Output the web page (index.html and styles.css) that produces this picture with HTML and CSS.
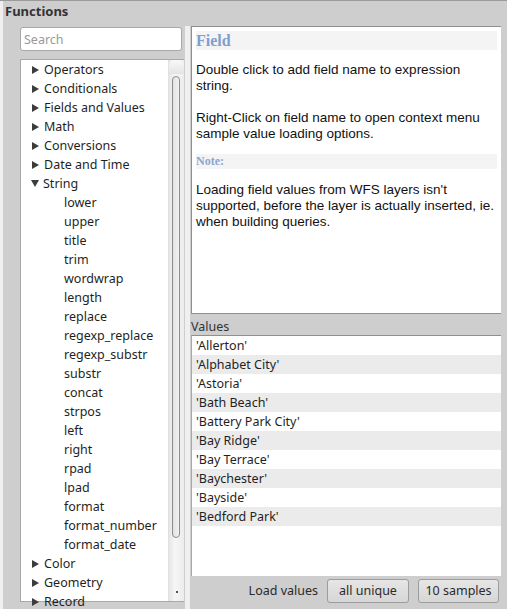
FILE: index.html
```html
<!DOCTYPE html>
<html>
<head>
<meta charset="utf-8">
<link rel="stylesheet" href="styles.css">
</head>
<body>
<div class="panel">
  <div class="dots-left"></div>
  <div class="main">
    <div class="title">Functions</div>
    <div class="body">
      <div class="left">
        <div class="search">Search</div>
        <div class="tree">
          <div class="tree-items">
            <div class="item"><span class="arrow"></span>Operators</div>
            <div class="item"><span class="arrow"></span>Conditionals</div>
            <div class="item"><span class="arrow"></span>Fields and Values</div>
            <div class="item"><span class="arrow"></span>Math</div>
            <div class="item"><span class="arrow"></span>Conversions</div>
            <div class="item"><span class="arrow"></span>Date and Time</div>
            <div class="item"><span class="arrow open"></span>String</div>
            <div class="item child">lower</div>
            <div class="item child">upper</div>
            <div class="item child">title</div>
            <div class="item child">trim</div>
            <div class="item child">wordwrap</div>
            <div class="item child">length</div>
            <div class="item child">replace</div>
            <div class="item child">regexp_replace</div>
            <div class="item child">regexp_substr</div>
            <div class="item child">substr</div>
            <div class="item child">concat</div>
            <div class="item child">strpos</div>
            <div class="item child">left</div>
            <div class="item child">right</div>
            <div class="item child">rpad</div>
            <div class="item child">lpad</div>
            <div class="item child">format</div>
            <div class="item child">format_number</div>
            <div class="item child">format_date</div>
            <div class="item"><span class="arrow"></span>Color</div>
            <div class="item"><span class="arrow"></span>Geometry</div>
            <div class="item"><span class="arrow"></span>Record</div>
          </div>
          <div class="scrollbar">
            <div class="sb-top"></div>
            <div class="sb-handle"></div>
            <div class="sb-dot"></div>
          </div>
        </div>
      </div>
      <div class="splitter"></div>
      <div class="right">
        <div class="help">
          <div class="h-head">Field</div>
          <p class="first">Double click to add field name to expression string.</p>
          <p>Right-Click on field name to open context menu sample value loading options.</p>
          <div class="h-note">Note:</div>
          <p class="after-note">Loading field values from WFS layers isn't supported, before the layer is actually inserted, ie. when building queries.</p>
        </div>
        <div class="values-label">Values</div>
        <div class="values">
          <div class="row">'Allerton'</div>
          <div class="row alt">'Alphabet City'</div>
          <div class="row">'Astoria'</div>
          <div class="row alt">'Bath Beach'</div>
          <div class="row">'Battery Park City'</div>
          <div class="row alt">'Bay Ridge'</div>
          <div class="row">'Bay Terrace'</div>
          <div class="row alt">'Baychester'</div>
          <div class="row">'Bayside'</div>
          <div class="row alt">'Bedford Park'</div>
        </div>
        <div class="buttons">
          <span class="load-label">Load values</span>
          <div class="btn btn-unique">all unique</div>
          <div class="btn btn-samples">10 samples</div>
        </div>
      </div>
    </div>
  </div>
</div>
</body>
</html>
```
FILE: styles.css
```css
html, body {
  margin: 0;
  padding: 0;
  background: #cecece;
}
.panel {
  width: 507px;
  height: 608px;
  border-top: 1px solid #9a9a9a;
  display: flex;
  overflow: hidden;
  font-family: "Noto Sans", sans-serif;
  font-size: 12.5px;
  color: #1f1f1f;
}
.dots-left {
  width: 3px;
  flex: none;
  background-image: radial-gradient(circle, #f2f2f2 0.7px, transparent 0.8px);
  background-size: 2px 2px;
}
.main {
  flex: 1;
  display: flex;
  flex-direction: column;
  min-width: 0;
}
.title {
  height: 25px;
  padding-left: 2px;
  font-weight: bold;
  font-size: 13px;
  line-height: 20px;
  color: #333;
}
.body {
  flex: 1;
  display: flex;
  min-height: 0;
}
.left {
  width: 164px;
  margin-left: 17px;
  flex: none;
  display: flex;
  flex-direction: column;
  padding-top: 1px;
}
.search {
  height: 22px;
  background: #fff;
  border: 1px solid #a8a8a8;
  border-radius: 3px;
  color: #9a9a9a;
  line-height: 23px;
  padding-left: 3px;
  font-size: 12.5px;
  width: 157px;
}
.tree {
  margin-top: 8px;
  height: 541px;
  background: #fff;
  border: 1px solid #a8a8a8;
  border-right: none;
  display: flex;
  position: relative;
}
.tree-items {
  flex: 1;
}
.item {
  height: 19px;
  line-height: 19px;
  padding-left: 10px;
  display: flex;
  align-items: center;
  white-space: nowrap;
}
.item.child {
  padding-left: 43px;
}
.arrow {
  width: 0;
  height: 0;
  border-top: 4px solid transparent;
  border-bottom: 4px solid transparent;
  border-left: 7px solid #3c3c3c;
  margin-right: 5px;
  margin-left: 1px;
}
.arrow.open {
  border-left: 4px solid transparent;
  border-right: 4px solid transparent;
  border-top: 7px solid #3c3c3c;
  border-bottom: none;
  margin-left: 0;
  margin-right: 4px;
}
.scrollbar {
  width: 15px;
  flex: none;
  background: linear-gradient(to right, #e6e6e6, #f6f6f6 40%, #ececec);
  border-left: 1px solid #e0e0e0;
  position: relative;
}
.sb-top {
  height: 14px;
  background: linear-gradient(#f8f8f8, #e4e4e4);
  border-radius: 5px 5px 0 0;
}
.sb-handle {
  position: absolute;
  left: 3px;
  top: 16px;
  width: 6px;
  height: 460px;
  border: 1px solid #8c8c8c;
  border-radius: 4px;
  background: linear-gradient(to right, #e2e2e2, #f2f2f2);
}
.sb-dot {
  position: absolute;
  left: 7px;
  bottom: 8px;
  width: 2px;
  height: 2px;
  background: #555;
}
.splitter {
  width: 5px;
  margin-left: 1px;
  flex: none;
  background-image: radial-gradient(circle, #f2f2f2 0.7px, transparent 0.8px);
  background-size: 2px 2px;
}
.right {
  width: 310px;
  margin-left: 1px;
  flex: none;
  display: flex;
  flex-direction: column;
}
.help {
  box-sizing: border-box;
  height: 288px;
  background: #fff;
  border: 1px solid #8f8f8f;
  border-right: none;
  padding: 4px 4px 0 4px;
  font-family: "Liberation Sans", Arial, sans-serif;
  font-size: 13.5px;
  line-height: 16px;
  color: #111;
}
.h-head {
  background: #f4f4f4;
  font-family: "Liberation Serif", serif;
  font-weight: bold;
  font-size: 16px;
  line-height: 19px;
  color: #7e9fd0;
}
.help p {
  margin: 16px 0 0 0;
}
.help p.first {
  margin-top: 12px;
}
.h-note {
  margin-top: 12px;
  background: #f4f4f4;
  font-family: "Liberation Serif", serif;
  font-weight: bold;
  font-size: 12px;
  line-height: 15px;
  color: #8aa7d3;
}
.help p.after-note {
  margin-top: 13px;
}
.values-label {
  height: 21px;
  line-height: 25px;
  color: #333;
}
.values {
  height: 240px;
  background: #fff;
  border-top: 1px solid #8f8f8f;
  border-left: 1px solid #a8a8a8;
}
.row {
  height: 19px;
  line-height: 19px;
  padding-left: 4px;
  white-space: nowrap;
}
.row.alt {
  background: #ebebeb;
}
.buttons {
  display: flex;
  align-items: center;
  justify-content: flex-end;
  padding-top: 2px;
  padding-right: 2px;
  height: 25px;
}
.load-label {
  color: #2a2a2a;
  margin-right: 9px;
}
.btn {
  height: 22px;
  line-height: 22px;
  border: 1px solid #9c9c9c;
  border-radius: 3px;
  background: linear-gradient(#e6e6e6, #d6d6d6);
  text-align: center;
  color: #2a2a2a;
}
.btn-unique {
  width: 80px;
  margin-right: 9px;
}
.btn-samples {
  width: 79px;
}
```
